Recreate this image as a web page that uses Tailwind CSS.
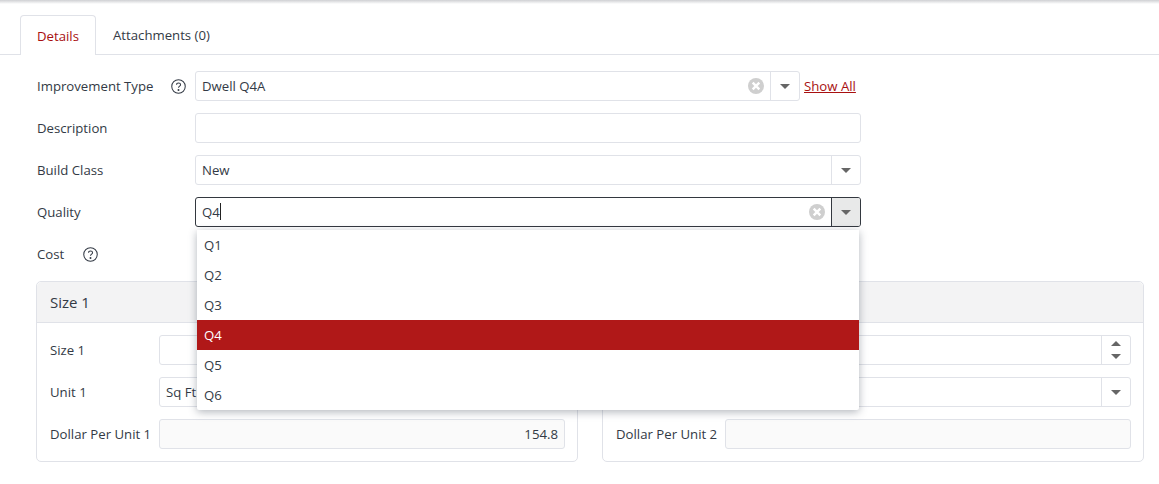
<!DOCTYPE html>
<html lang="en">

<head>
  <meta charset="UTF-8" />
  <title>Improvement Details</title>
  <script src="https://cdn.jsdelivr.net/npm/@tailwindcss/browser@4"></script>
</head>

<body class="h-[484px] overflow-hidden bg-white font-['Open_Sans',sans-serif] text-[13.2px] text-[#333a45]">

  <div class="h-[4px] bg-gradient-to-b from-[#cfd0d3] to-white"></div>

  <!-- Tabs -->
  <div class="mt-[11px] pl-[20px] flex h-[40px] border-b border-[#e0e2e8]">
    <div class="h-[40px] w-[76px] pl-[16px] pt-[2px] flex items-center bg-white border border-b-0 border-[#e0e2e8] rounded-t-[4px] text-[#a81010]">Details</div>
    <div class="pl-[17px] pt-[2px] flex items-center h-[40px]">Attachments (0)</div>
  </div>

  <!-- Form -->
  <div class="relative mt-[16px] pl-[36px] pr-[15px]">
    <div class="flex flex-col gap-[12px]">

      <div class="flex items-center h-[30px]">
        <div class="w-[117px] pl-px pt-[2px] whitespace-nowrap">Improvement Type</div>
        <div class="w-[42px] pl-[18px]">
          <svg class="w-[15px] h-[15px]" viewBox="0 0 16 16" fill="none" stroke="#333a45" stroke-width="1.1"><circle cx="8" cy="8" r="7.2" /><path d="M5.9 6.2c0-1.2.9-2 2.2-2s2.1.8 2.1 1.8c0 1.5-2.2 1.6-2.2 3.4" /><circle cx="8" cy="11.7" r=".5" fill="#333a45" /></svg>
        </div>
        <div class="w-[605px] h-[30px] flex items-center border border-[#e0e2e8] rounded-[3px]">
          <div class="flex-1 pl-[6px] pt-[2px]">Dwell Q4A</div>
          <svg class="w-[16px] h-[16px] mr-[6px]" viewBox="0 0 16 16"><circle cx="8" cy="8" r="8" fill="#cfcfcf" /><path d="M4.7 4.7l6.6 6.6M11.3 4.7l-6.6 6.6" stroke="#fff" stroke-width="2.4" /></svg>
          <div class="w-[29px] h-full flex items-center justify-center border-l border-[#e0e2e8]">
            <div class="w-0 h-0 border-x-[5px] border-x-transparent border-t-[5px] border-t-[#666]"></div>
          </div>
        </div>
        <a href="#" class="ml-[4px] pt-[1px] text-[#a81010] underline">Show All</a>
      </div>

      <div class="flex items-center h-[30px]">
        <div class="w-[159px] pl-px pt-[2px]">Description</div>
        <div class="w-[666px] h-[30px] border border-[#e0e2e8] rounded-[3px]"></div>
      </div>

      <div class="flex items-center h-[30px]">
        <div class="w-[159px] pl-px pt-[2px]">Build Class</div>
        <div class="w-[666px] h-[30px] flex items-center border border-[#e0e2e8] rounded-[3px]">
          <div class="flex-1 pl-[6px] pt-[2px]">New</div>
          <div class="w-[29px] h-full flex items-center justify-center border-l border-[#e0e2e8]">
            <div class="w-0 h-0 border-x-[5px] border-x-transparent border-t-[5px] border-t-[#666]"></div>
          </div>
        </div>
      </div>

      <div class="flex items-center h-[30px]">
        <div class="w-[159px] pl-px pt-[2px]">Quality</div>
        <div class="w-[666px] h-[30px] flex items-center border border-[#33383f] rounded-[3px]">
          <div class="flex-1 pl-[6px] flex items-center"><span class="pt-[2px]">Q4</span><span class="w-px h-[17px] bg-[#222]"></span></div>
          <svg class="w-[16px] h-[16px] mr-[6px]" viewBox="0 0 16 16"><circle cx="8" cy="8" r="8" fill="#cfcfcf" /><path d="M4.7 4.7l6.6 6.6M11.3 4.7l-6.6 6.6" stroke="#fff" stroke-width="2.4" /></svg>
          <div class="w-[29px] h-full flex items-center justify-center border-l border-[#33383f] bg-[#e8e9e9] rounded-r-[2px]">
            <div class="w-0 h-0 border-x-[5px] border-x-transparent border-t-[5px] border-t-[#666]"></div>
          </div>
        </div>
      </div>

      <div class="flex items-center h-[30px]">
        <div class="w-[47px] pl-px pt-[2px]">Cost</div>
        <svg class="w-[15px] h-[15px]" viewBox="0 0 16 16" fill="none" stroke="#333a45" stroke-width="1.1"><circle cx="8" cy="8" r="7.2" /><path d="M5.9 6.2c0-1.2.9-2 2.2-2s2.1.8 2.1 1.8c0 1.5-2.2 1.6-2.2 3.4" /><circle cx="8" cy="11.7" r=".5" fill="#333a45" /></svg>
      </div>
    </div>

    <!-- Size panels -->
    <div class="mt-[12px] grid grid-cols-2 gap-[24px]">
      <div class="h-[181px] border border-[#e0e2e8] rounded-[5px]">
        <div class="h-[41px] pl-[13px] flex items-center bg-[#f3f3f4] border-b border-[#e0e2e8] rounded-t-[5px] text-[15px]">Size 1</div>
        <div class="mt-[12px] pl-[13px] pr-[12px] flex flex-col gap-[12px]">
          <div class="flex items-center h-[30px]">
            <div class="w-[109px] pt-[2px]">Size 1</div>
            <div class="flex-1 h-[30px] border border-[#e0e2e8] rounded-[3px]"></div>
          </div>
          <div class="flex items-center h-[30px]">
            <div class="w-[109px] pt-[2px]">Unit 1</div>
            <div class="flex-1 h-[30px] pl-[6px] pt-[2px] flex items-center border border-[#e0e2e8] rounded-[3px]">Sq Ft</div>
          </div>
          <div class="flex items-center h-[30px]">
            <div class="w-[109px] pt-[2px] whitespace-nowrap">Dollar Per Unit 1</div>
            <div class="flex-1 h-[30px] pr-[6px] pt-[2px] flex items-center justify-end bg-[#fafafa] border border-[#e0e2e8] rounded-[3px]">154.8</div>
          </div>
        </div>
      </div>

      <div class="h-[181px] border border-[#e0e2e8] rounded-[5px]">
        <div class="h-[41px] pl-[13px] flex items-center bg-[#f3f3f4] border-b border-[#e0e2e8] rounded-t-[5px] text-[15px]">Size 2</div>
        <div class="mt-[12px] pl-[13px] pr-[12px] flex flex-col gap-[12px]">
          <div class="flex items-center h-[30px]">
            <div class="w-[109px] pt-[2px]">Size 2</div>
            <div class="flex-1 h-[30px] flex justify-end border border-[#e0e2e8] rounded-[3px]">
              <div class="w-[29px] h-full flex flex-col items-center justify-center gap-[8px] border-l border-[#e0e2e8]">
                <div class="w-0 h-0 border-x-[5px] border-x-transparent border-b-[5px] border-b-[#666]"></div>
                <div class="w-0 h-0 border-x-[5px] border-x-transparent border-t-[5px] border-t-[#666]"></div>
              </div>
            </div>
          </div>
          <div class="flex items-center h-[30px]">
            <div class="w-[109px] pt-[2px]">Unit 2</div>
            <div class="flex-1 h-[30px] flex justify-end border border-[#e0e2e8] rounded-[3px]">
              <div class="w-[29px] h-full flex items-center justify-center border-l border-[#e0e2e8]">
                <div class="w-0 h-0 border-x-[5px] border-x-transparent border-t-[5px] border-t-[#666]"></div>
              </div>
            </div>
          </div>
          <div class="flex items-center h-[30px]">
            <div class="w-[109px] pt-[2px] whitespace-nowrap">Dollar Per Unit 2</div>
            <div class="flex-1 h-[30px] bg-[#fafafa] border border-[#e0e2e8] rounded-[3px]"></div>
          </div>
        </div>
      </div>
    </div>

    <!-- Quality dropdown menu -->
    <div class="absolute left-[197px] top-[159px] w-[662px] bg-white shadow-[0_2px_8px_rgba(60,70,85,0.4)] rounded-b-[2px]">
      <div class="h-[30px] pl-[7px] pt-[2px] flex items-center">Q1</div>
      <div class="h-[30px] pl-[7px] pt-[2px] flex items-center">Q2</div>
      <div class="h-[30px] pl-[7px] pt-[2px] flex items-center">Q3</div>
      <div class="h-[30px] pl-[7px] pt-[2px] flex items-center bg-[#b01818] text-white">Q4</div>
      <div class="h-[30px] pl-[7px] pt-[2px] flex items-center">Q5</div>
      <div class="h-[30px] pl-[7px] pt-[2px] flex items-center">Q6</div>
    </div>
  </div>

</body>

</html>
